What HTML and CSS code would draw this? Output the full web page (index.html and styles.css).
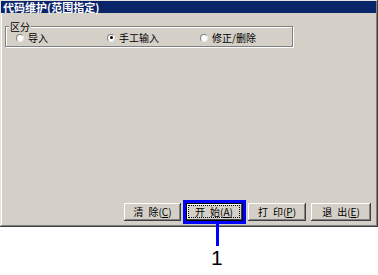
FILE: index.html
```html
<!DOCTYPE html>
<html lang="zh-CN">
  <head>
    <meta charset="UTF-8" />
    <meta name="viewport" content="width=device-width, initial-scale=1.0" />
    <title>代码维护(范围指定)</title>
    <link rel="stylesheet" href="styles.css">
  </head>
  <body>
    <div class="page">
      <div class="window">
        <div class="titlebar">代码维护(范围指定)</div>

        <fieldset class="group">
          <legend>区分</legend>
          <div class="radios">
            <label class="radio"><span class="dot"></span>导入</label>
            <label class="radio"><span class="dot checked"></span>手工输入</label>
            <label class="radio"><span class="dot"></span>修正/删除</label>
          </div>
        </fieldset>

        <div class="buttons">
          <div class="btn"><span class="sp">清</span>除(<u>C</u>)</div>
          <div class="btn focus">
            <div class="focus-ring"><span class="sp">开</span>始(<u>A</u>)</div>
          </div>
          <div class="btn w58"><span class="sp">打</span>印(<u>P</u>)</div>
          <div class="btn w60"><span class="sp">退</span>出(<u>E</u>)</div>
        </div>
      </div>

      <!-- callout for the start button -->
      <div class="callout-line"></div>
      <div class="callout-num">1</div>
    </div>
  </body>
</html>
```

FILE: styles.css
```css
body {
  margin: 0;
  background: #fff;
  font-family: "Noto Sans CJK SC", "DejaVu Sans", sans-serif;
  font-size: 10px;
  color: #000;
}
.page {
  position: relative;
  width: 378px;
  height: 275px;
}
.window {
  width: 378px;
  height: 227px;
  box-sizing: border-box;
  padding: 1px 2px 2px 1px;
  background: #d4d0c8;
  box-shadow: inset -1px -1px #404040, inset 1px 1px #e4e2dc,
    inset -2px -2px #808080, inset 2px 2px #fff;
  display: flex;
  flex-direction: column;
}
.titlebar {
  height: 12px;
  line-height: 12px;
  padding-left: 2px;
  background: #0a246a;
  color: #fff;
  font-size: 11px;
  font-weight: bold;
  white-space: nowrap;
}

/* group box */
.group {
  margin: 8px 0 0 4px;
  padding: 0 0 3px 3px;
  width: 288px;
  min-inline-size: 0;
  box-sizing: border-box;
  border: 1px solid #808080;
  box-shadow: inset 1px 1px #fff, 1px 1px #fff;
}
.group legend {
  padding: 0 1px;
  margin-left: 0;
  line-height: 11px;
  background: #d4d0c8;
}
.radios {
  display: grid;
  grid-template-columns: 91px 93px auto;
  padding-left: 7px;
}
.radio {
  display: flex;
  align-items: center;
  gap: 4px;
  line-height: 11px;
  white-space: nowrap;
}
.dot {
  position: relative;
  width: 8px;
  height: 8px;
  box-sizing: border-box;
  border-radius: 50%;
  background: #fff;
  border: 1px solid;
  border-color: #808080 #e8e8e8 #e8e8e8 #808080;
}
.dot.checked::after {
  content: "";
  position: absolute;
  left: 1.5px;
  top: 1.5px;
  width: 3px;
  height: 3px;
  border-radius: 50%;
  background: #000;
}

/* buttons */
.buttons {
  margin-top: auto;
  display: flex;
  justify-content: flex-end;
  gap: 5px;
  padding: 0 5px 4px 0;
}
.btn {
  width: 57px;
  height: 18px;
  box-sizing: border-box;
  background: #d4d0c8;
  box-shadow: inset -1px -1px #404040, inset 1px 1px #fff,
    inset -2px -2px #808080;
  display: flex;
  align-items: center;
  justify-content: center;
  line-height: 12px;
  white-space: nowrap;
}
.btn.w58 {
  width: 58px;
}
.btn.w60 {
  width: 60px;
}
.btn .sp {
  margin-right: 5px;
}
.btn.focus {
  padding: 2px 3px 3px 2px;
  outline: 3px solid #0000ff;
  box-shadow: inset 0 0 0 1px #000, inset -2px -2px #404040,
    inset 2px 2px #fff;
}
.focus-ring {
  flex: 1;
  align-self: stretch;
  border: 1px dotted #000;
  display: flex;
  align-items: center;
  justify-content: center;
}

/* annotation */
.callout-line {
  position: absolute;
  left: 216px;
  top: 224px;
  width: 3px;
  height: 22px;
  background: #0000ff;
}
.callout-num {
  position: absolute;
  left: 211px;
  top: 246px;
  font-family: "Liberation Sans", Arial, sans-serif;
  font-size: 21px;
  line-height: 24px;
}
```
